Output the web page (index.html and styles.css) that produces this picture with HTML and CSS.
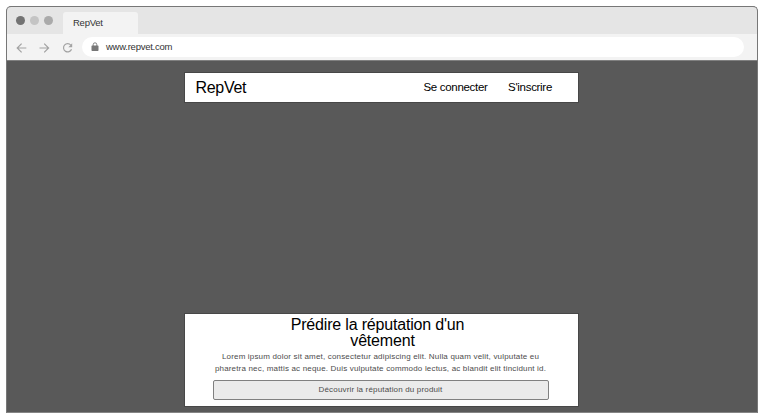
FILE: index.html
```html
<!DOCTYPE html>
<html lang="fr">
<head>
<meta charset="utf-8">
<title>RepVet</title>
<link rel="stylesheet" href="styles.css">
</head>
<body>
<div class="browser">
  <div class="tabs">
    <i class="dot dark"></i><i class="dot light"></i><i class="dot"></i>
    <div class="tab"><span>RepVet</span></div>
  </div>
  <div class="toolbar">
    <svg class="nav-icons" width="60" height="12" viewBox="0 0 60 12" fill="none" stroke="#a3a3a3" stroke-width="1.2">
      <path d="M10.3 6H1.3M5.6 1.6L1.2 6l4.4 4.4"/>
      <path d="M23.5 6h9M28.2 1.6L32.6 6l-4.4 4.4"/>
      <path d="M54.8 3.2A4.1 4.1 0 1 0 55.5 7.2"/>
      <path d="M56.2 1.3v3.9h-3.9z" fill="#a3a3a3" stroke="none"/>
    </svg>
    <div class="address">
      <svg width="8" height="10" viewBox="0 0 8 10"><rect x=".5" y="3.4" width="7" height="5.6" rx=".7" fill="#777"/><path d="M2.2 4V2.6a1.8 1.8 0 0 1 3.6 0V4" fill="none" stroke="#777" stroke-width=".9"/></svg>
      <span>www.repvet.com</span>
    </div>
  </div>
  <main class="page">
    <header class="card header">
      <span class="brand">RepVet</span>
      <nav><a class="login">Se connecter</a><a class="signup">S'inscrire</a></nav>
    </header>
    <section class="card hero">
      <h1><span>Prédire la réputation d'un</span><br>vêtement</h1>
      <p><span class="line1">Lorem ipsum dolor sit amet, consectetur adipiscing elit. Nulla quam velit, vulputate eu</span><br><span class="line2">pharetra nec, mattis ac neque. Duis vulputate commodo lectus, ac blandit elit tincidunt id.</span></p>
      <button>Découvrir la réputation du produit</button>
    </section>
  </main>
</div>
</body>
</html>
```
FILE: styles.css
```css
* { box-sizing: border-box; }
body { margin: 0; padding: 6px; background: #fff; font-family: "Liberation Sans", Arial, sans-serif; overflow: hidden; }
.browser { width: 752px; height: 407px; display: flex; flex-direction: column; border: 1px solid #777; border-bottom-color: #858585; border-radius: 5px 5px 0 0; overflow: hidden; background: #595959; }
.tabs { height: 27px; flex: none; display: flex; align-items: flex-start; background: #e5e5e5; padding-left: 9px; }
.dot { width: 9px; height: 9px; margin: 9px 5px 0 0; border-radius: 50%; background: #aaa; }
.dot.dark { background: #737373; }
.dot.light { background: #c4c4c4; }
.tab { width: 75px; height: 22px; margin: 5px 0 0 5px; padding: 5px 10px; background: #f3f3f3; border-radius: 3px 3px 0 0; font-size: 9.5px; line-height: 12px; letter-spacing: -.25px; color: #333; white-space: nowrap; }
.toolbar { height: 27px; flex: none; display: flex; align-items: center; background: #f3f3f3; border-bottom: 1px solid #808080; padding: 0 13px 0 9px; }
.nav-icons { flex: none; margin-top: 2px; }
.address { flex: 1; height: 20px; margin: 0 0 0 6px; border-radius: 10px; background: #fff; display: flex; align-items: center; padding-left: 9px; font-size: 9.5px; letter-spacing: -.25px; color: #333; }
.address span { margin-top: -2px; }
.address svg { margin-right: 7px; }
.page { flex: 1; display: flex; flex-direction: column; align-items: center; justify-content: space-between; padding: 11px 1px 5px 0; }
.card { width: 395px; background: #fff; border: 1px solid #474747; }
.header { height: 31px; display: flex; align-items: center; justify-content: space-between; padding: 0 26px 0 10.5px; color: #000; }
.brand { font-size: 16px; letter-spacing: -.3px; }
nav { display: flex; gap: 20.5px; font-size: 11.5px; letter-spacing: -.3px; padding-bottom: 1px; }
.hero { height: 94px; padding: 3px 28px 0; text-align: center; }
h1 { margin: 0 -2px 0 0; font-size: 16px; line-height: 16px; font-weight: 400; letter-spacing: -.18px; color: #000; white-space: nowrap; }
h1 span { margin-left: -10px; }
p { margin: 2px -9px 0 -11px; font-size: 8px; line-height: 12px; letter-spacing: .175px; color: #4c4c4c; white-space: nowrap; }
button { display: block; width: 336px; height: 20px; margin: 5px 0 0; padding: 0 1px 0 0; border: 1px solid #808080; border-radius: 2px; background: #ebebeb; color: #4c4c4c; font: 8px/18px "Liberation Sans", Arial, sans-serif; letter-spacing: .165px; }
```
